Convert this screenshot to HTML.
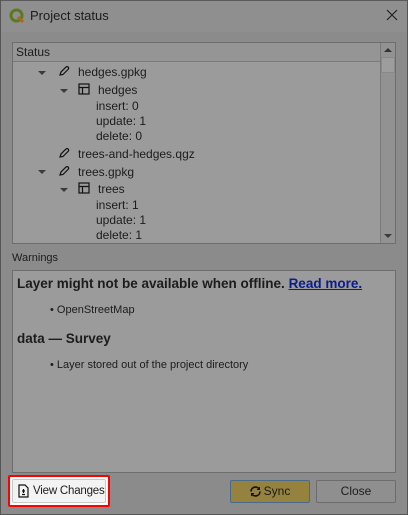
<!DOCTYPE html>
<html><head><style>
*{box-sizing:border-box;margin:0;padding:0}
body{width:408px;height:515px;background:#8b8b8b;font-family:"Liberation Sans",sans-serif;font-size:12px;color:#1c1c1c;position:relative;overflow:hidden}
.a{position:absolute;white-space:nowrap}
.title{left:0;top:0;width:408px;height:32px;background:#8f8f8f;border:1px solid #5a5a5a;border-bottom:none}
.box{background:#9b9b9b;border:1px solid #6e6e6e}
.tri{width:0;height:0;border-left:4px solid transparent;border-right:4px solid transparent;border-top:4px solid #3a3a3a}
.btn{border:1px solid #6c6c6c;border-radius:2px;background:#8f8f8f;text-align:center;line-height:21px}
</style></head><body>
<div class="a title"></div>
<div class="a" style="left:0;top:0;width:1px;height:515px;background:#555"></div>
<div class="a" style="right:0;top:0;width:1px;height:515px;background:#555"></div>
<div class="a" style="left:0;bottom:0;width:408px;height:1px;background:#555"></div>
<svg class="a" style="left:9px;top:8px" width="16" height="16" viewBox="0 0 16 16"><circle cx="7.5" cy="7.5" r="5.5" fill="none" stroke="#5b7a1e" stroke-width="3"/><path d="M9 9 L14 14" stroke="#a86a1a" stroke-width="3"/></svg>
<div class="a" style="left:30px;top:8px;font-size:13px">Project status</div>
<svg class="a" style="left:386px;top:9px" width="12" height="12"><path d="M1 1L11 11M11 1L1 11" stroke="#222" stroke-width="1.2"/></svg>

<div class="a box" style="left:12px;top:42px;width:384px;height:202px"></div>
<div class="a" style="left:13px;top:43px;width:367px;height:19px;background:#959595;border-bottom:1px solid #7a7a7a;padding:2px 3px">Status</div>
<div class="a" style="left:380px;top:43px;width:15px;height:200px;background:#929292;border-left:1px solid #7a7a7a"></div>
<div class="a" style="left:381px;top:57px;width:14px;height:16px;background:#9d9d9d;border:1px solid #888"></div>
<div class="a" style="left:384px;top:48px;border-left:4px solid transparent;border-right:4px solid transparent;border-bottom:4px solid #333"></div>
<div class="a tri" style="left:384px;top:234px"></div>

<div class="a tri" style="left:38px;top:71px"></div>
<svg class="a" style="left:58px;top:65px" width="12" height="12"><path d="M2 10L3 7L8 2Q9.5 1 10.5 2.5Q11 3.5 10 4.5L5 9.5Z" fill="none" stroke="#111" stroke-width="1.2"/></svg>
<div class="a" style="left:78px;top:65px">hedges.gpkg</div>
<div class="a tri" style="left:60px;top:89px"></div>
<svg class="a" style="left:78px;top:83px" width="12" height="12"><rect x="1" y="1" width="10" height="10" fill="none" stroke="#111" stroke-width="1.2"/><path d="M1 4.5H11M4.5 4.5V11" stroke="#111" stroke-width="1.2"/></svg>
<div class="a" style="left:98px;top:83px">hedges</div>
<div class="a" style="left:96px;top:99px">insert: 0</div>
<div class="a" style="left:96px;top:114px">update: 1</div>
<div class="a" style="left:96px;top:129px">delete: 0</div>
<svg class="a" style="left:58px;top:147px" width="12" height="12"><path d="M2 10L3 7L8 2Q9.5 1 10.5 2.5Q11 3.5 10 4.5L5 9.5Z" fill="none" stroke="#111" stroke-width="1.2"/></svg>
<div class="a" style="left:78px;top:147px">trees-and-hedges.qgz</div>
<div class="a tri" style="left:38px;top:170px"></div>
<svg class="a" style="left:58px;top:165px" width="12" height="12"><path d="M2 10L3 7L8 2Q9.5 1 10.5 2.5Q11 3.5 10 4.5L5 9.5Z" fill="none" stroke="#111" stroke-width="1.2"/></svg>
<div class="a" style="left:78px;top:165px">trees.gpkg</div>
<div class="a tri" style="left:60px;top:188px"></div>
<svg class="a" style="left:78px;top:182px" width="12" height="12"><rect x="1" y="1" width="10" height="10" fill="none" stroke="#111" stroke-width="1.2"/><path d="M1 4.5H11M4.5 4.5V11" stroke="#111" stroke-width="1.2"/></svg>
<div class="a" style="left:98px;top:182px">trees</div>
<div class="a" style="left:96px;top:198px">insert: 1</div>
<div class="a" style="left:96px;top:213px">update: 1</div>
<div class="a" style="left:96px;top:228px">delete: 1</div>

<div class="a" style="left:12px;top:252px;font-size:11px">Warnings</div>
<div class="a box" style="left:12px;top:270px;width:384px;height:203px"></div>
<div class="a" style="left:17px;top:276px;font-size:13.5px;font-weight:bold">Layer might not be available when offline. <span style="color:#0b1c8c;text-decoration:underline">Read more.</span></div>
<div class="a" style="left:50px;top:304px;font-size:11px">• OpenStreetMap</div>
<div class="a" style="left:17px;top:331px;font-size:13.5px;font-weight:bold">data — Survey</div>
<div class="a" style="left:50px;top:359px;font-size:11px">• Layer stored out of the project directory</div>

<div class="a" style="left:8px;top:475px;width:102px;height:32px;border:2px solid #f00;border-radius:2px;background:#fff"></div>
<div class="a" style="left:12px;top:479px;width:94px;height:24px;background:#f3f3f3;border:1px solid #c8c8c8;border-radius:2px"></div>
<svg class="a" style="left:18px;top:484px" width="11" height="14"><path d="M1 1H7L10 4V13H1Z" fill="none" stroke="#111" stroke-width="1.2"/><path d="M5.5 5V9M4 7H7M4 10.5H7" stroke="#111" stroke-width="1.2"/></svg>
<div class="a" style="left:33px;top:485px;font-size:11.5px;letter-spacing:-0.2px">View Changes</div>

<div class="a btn" style="left:230px;top:480px;width:80px;height:23px;background:#96823f;border-color:#4a6a8a;padding-left:14px">Sync</div>
<svg class="a" style="left:249px;top:485px" width="13" height="13" viewBox="0 0 13 13"><path d="M2 6.5A4.5 4.5 0 0 1 10.5 4.5M11 6.5A4.5 4.5 0 0 1 2.5 8.5" fill="none" stroke="#111" stroke-width="1.6"/><path d="M11 1.5V5H7.5Z M2 11.5V8H5.5Z" fill="#111"/></svg>
<div class="a btn" style="left:316px;top:480px;width:80px;height:23px">Close</div>
</body></html>
